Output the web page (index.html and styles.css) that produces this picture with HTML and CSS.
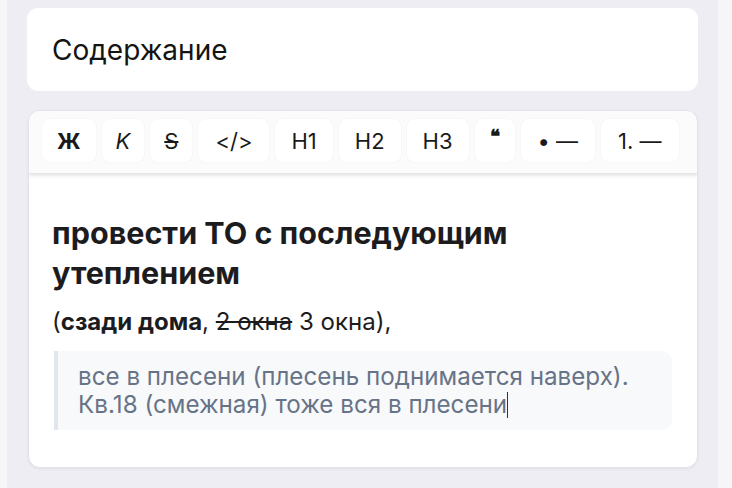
FILE: index.html
```html
<!DOCTYPE html>
<html lang="ru">
<head>
<meta charset="utf-8">
<link rel="stylesheet" href="styles.css">
</head>
<body>
<div class="panel">
  <div class="title-card">Содержание</div>
  <div class="editor">
    <div class="toolbar">
      <button class="btn b-bold">Ж</button>
      <button class="btn b-italic">K</button>
      <button class="btn b-strike">S</button>
      <button class="btn b-wide">&lt;/&gt;</button>
      <button class="btn b-h">H1</button>
      <button class="btn b-h">H2</button>
      <button class="btn b-h">H3</button>
      <button class="btn b-quote">❝</button>
      <button class="btn b-wide">• —</button>
      <button class="btn b-wide">1. —</button>
    </div>
    <div class="content">
      <h2 class="heading">провести ТО с последующим утеплением</h2>
      <p class="para">(<strong>сзади дома</strong>, <s>2 окна</s> 3 окна),</p>
      <blockquote class="quote">все в плесени (плесень поднимается наверх). Кв.18 (смежная) тоже вся в плесени<span class="caret"></span></blockquote>
    </div>
  </div>
</div>
</body>
</html>
```
FILE: styles.css
```css
html, body {
  margin: 0;
  padding: 0;
  height: 100%;
}
body {
  background: #f6f6f9;
  font-family: Inter, "Noto Sans", sans-serif;
  color: #1c1c1e;
}
.panel {
  margin-left: 7px;
  width: 711px;
  height: 488px;
  box-sizing: border-box;
  background: #ededf3;
  padding: 8px 20px 0 20px;
}
.title-card {
  background: #fff;
  border-radius: 11px;
  height: 83px;
  box-sizing: border-box;
  padding: 0 25px;
  display: flex;
  align-items: center;
  font-size: 28px;
  color: #141414;
  width: 671px;
}
.editor {
  margin-top: 19px;
  margin-left: 1px;
  width: 670px;
  height: 358px;
  box-sizing: border-box;
  background: #fff;
  border: 1px solid #e3e3ea;
  border-radius: 12px;
  box-shadow: 0 1px 3px rgba(0,0,0,0.06);
  overflow: hidden;
}
.toolbar {
  display: flex;
  gap: 6px;
  padding: 8px 13px 11px;
  background: #fbfbfc;
  box-shadow: 0 2px 3px rgba(0,0,0,0.10);
  border-bottom: 1px solid #e4e4e8;
  position: relative;
}
.btn {
  height: 43px;
  padding: 0 15px;
  border: none;
  border-radius: 8px;
  background: #fff;
  box-shadow: 0 0 2px rgba(0,0,0,0.06);
  font-family: Inter, "Noto Sans", sans-serif;
  font-size: 22px;
  color: #1a1a1a;
  display: flex;
  align-items: center;
  justify-content: center;
}
.b-bold { font-weight: 700; }
.b-italic { font-style: italic; padding: 0 14px; }
.b-strike { padding: 0 14px; text-decoration: line-through; text-decoration-thickness: 1.5px; }
.b-wide { padding: 0 17px; }
.b-h { padding: 0 16px; }
.b-quote { font-size: 19px; padding: 6px 15px 0; align-items: flex-start; font-weight: 700; }
.content {
  padding: 39px 23px 0 23px;
}
.heading {
  margin: 0;
  font-size: 30.5px;
  font-weight: 700;
  line-height: 40px;
  color: #1c1c1e;
}
.para {
  margin: 12px 0 0;
  font-size: 24px;
  line-height: 34px;
  color: #1c1c1e;
}
.para s { text-decoration-thickness: 1.5px; }
.quote {
  margin: 12px 2px 0 2px;
  background: #f8f9fb;
  border-left: 4px solid #e1e5ec;
  border-radius: 0 10px 10px 0;
  padding: 12px 24px 11px 20px;
  font-size: 24.2px;
  line-height: 28px;
  color: #677386;
}
.caret {
  display: inline-block;
  width: 1px;
  height: 26px;
  background: #333;
  vertical-align: -5px;
}
```
